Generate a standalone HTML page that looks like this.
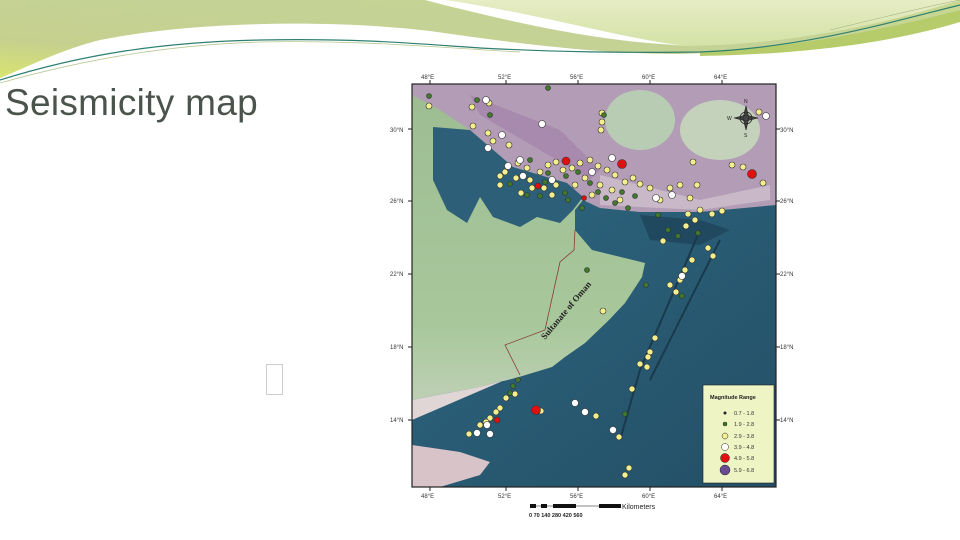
<!DOCTYPE html>
<html><head><meta charset="utf-8">
<style>
html,body{margin:0;padding:0;background:#fff;}
body{width:960px;height:540px;position:relative;overflow:hidden;font-family:"Liberation Sans",sans-serif;}
.t{position:absolute;left:5px;top:82px;font-size:37px;color:#4a544c;letter-spacing:0.3px;}
.box{position:absolute;left:266px;top:364px;width:15px;height:29px;border:1px solid #ccc;}
svg{position:absolute;left:0;top:0;}
</style></head><body>
<svg width="960" height="540" viewBox="0 0 960 540">
<defs>
<linearGradient id="g1" x1="0" y1="1" x2="1" y2="0">
<stop offset="0" stop-color="#d8e470"/><stop offset="0.25" stop-color="#c6d08e"/><stop offset="0.6" stop-color="#c4d296"/><stop offset="1" stop-color="#c8d890"/>
</linearGradient>
<linearGradient id="g2" x1="0" y1="0" x2="0" y2="1">
<stop offset="0" stop-color="#e6ecc4"/><stop offset="1" stop-color="#d4e2a6"/>
</linearGradient>
<linearGradient id="land" x1="0" y1="0" x2="0" y2="1">
<stop offset="0" stop-color="#9dbc92"/><stop offset="0.6" stop-color="#a8c89c"/><stop offset="1" stop-color="#d8d8d0"/>
</linearGradient>
<linearGradient id="sea" x1="0" y1="0" x2="1" y2="1">
<stop offset="0" stop-color="#2e6680"/><stop offset="1" stop-color="#234f66"/>
</linearGradient>
</defs>
<!-- banner -->
<path d="M0,0 H960 V12 C900,32 800,50 680,54 C600,54 520,44 430,31 C340,20 200,20 100,40 C60,50 30,66 0,78 Z" fill="url(#g1)"/>
<path d="M440,0 H960 C880,26 780,46 680,46 C610,38 540,14 440,0 Z" fill="url(#g2)"/>
<path d="M425,0 H445 C540,14 620,38 680,45 C600,42 510,22 425,0 Z" fill="#fff"/>
<path d="M700,52 C800,48 890,28 960,10 V22 C900,40 820,54 700,56 Z" fill="#b6cc6a"/>
<path d="M0,80 C80,55 160,42 260,40 C360,38 420,44 480,48 C560,52 620,53 700,52 C800,48 880,25 960,5" fill="none" stroke="#2f8070" stroke-width="1.2"/>
<path d="M0,83 C90,58 170,45 260,42 C360,40 430,47 520,52" fill="none" stroke="#b8c890" stroke-width="0.8"/>
<path d="M830,30 C880,18 920,8 960,0" fill="none" stroke="#a0b080" stroke-width="0.6"/>
<!-- map -->
<rect x="412" y="84" width="364" height="403" fill="url(#land)"/>
<path d="M412,84 H776 V205 L700,212 L640,212 L600,208 L583,200 L567,183 L513,167 L470,130 L440,110 L412,95 Z" fill="#b39cb5"/>
<ellipse cx="640" cy="120" rx="35" ry="30" fill="#b8ccb4"/>
<ellipse cx="720" cy="130" rx="40" ry="30" fill="#c4d2bc"/>
<path d="M470,95 L560,130 L600,170 L590,180 L540,150 L480,115 Z" fill="#a88aae"/>
<path d="M600,175 L700,200 L770,185 L770,200 L700,210 L600,205 Z" fill="#c8b8c8"/>
<path d="M433,127 L470,130 L513,167 L567,183 L583,197 L573,210 L560,223 L537,217 L520,227 L493,217 L480,197 L467,223 L447,210 L433,180 Z" fill="#2d6078"/>
<path d="M583,200 L600,208 L640,212 L700,212 L776,205 V487 H412 V400 L479,387 L519,377 L552,367 L565,357 L585,343 L609,320 L625,303 L642,277 L645,263 L592,250 L575,230 L575,210 Z" fill="url(#sea)"/>
<path d="M412,400 L479,387 L519,377 L505,380 L412,420 Z" fill="#e0d6d6"/>
<path d="M412,445 L460,452 L490,462 L480,475 L440,487 L412,487 Z" fill="#d8c4c8"/>
<path d="M640,215 L700,220 L730,230 L700,245 L650,240 Z" fill="#1c4055" opacity="0.7"/>
<path d="M700,230 L640,370 L620,440 M720,240 L650,380" stroke="#1a3a4c" stroke-width="2" fill="none"/>
<path d="M575,230 L574,250 L560,262 L545,330 L505,345 L520,375" fill="none" stroke="#8a3a3a" stroke-width="0.8"/>
<text x="545" y="340" font-family="Liberation Serif,serif" font-weight="bold" font-size="9" fill="#222" transform="rotate(-50 545 340)">Sultanate of Oman</text>
<rect x="412" y="84" width="364" height="403" fill="none" stroke="#222" stroke-width="1.2"/>
<!-- compass -->
<g transform="translate(746,118)" stroke="#222" fill="#444"><path d="M0,-12 L3,0 L0,12 L-3,0 Z M-12,0 L0,-3 L12,0 L0,3 Z" stroke-width="0.6"/><circle r="6" fill="none" stroke-width="0.8"/></g>
<g font-size="5" fill="#222"><text x="744" y="103">N</text><text x="727" y="120">W</text><text x="744" y="137">S</text></g>
<!-- dots -->
<g stroke="#333" stroke-width="0.6">
<g fill="#f3ef8c">
<circle cx="429" cy="106" r="3"/><circle cx="472" cy="107" r="3"/><circle cx="489" cy="103" r="3"/><circle cx="473" cy="126" r="3"/><circle cx="488" cy="133" r="3"/><circle cx="493" cy="141" r="3"/><circle cx="509" cy="145" r="3"/><circle cx="518" cy="163" r="3"/><circle cx="527" cy="168" r="3"/><circle cx="505" cy="172" r="3"/><circle cx="500" cy="176" r="3"/><circle cx="516" cy="178" r="3"/><circle cx="530" cy="180" r="3"/><circle cx="540" cy="172" r="3"/><circle cx="548" cy="165" r="3"/><circle cx="556" cy="162" r="3"/><circle cx="563" cy="170" r="3"/><circle cx="572" cy="168" r="3"/><circle cx="580" cy="163" r="3"/><circle cx="590" cy="160" r="3"/><circle cx="598" cy="166" r="3"/><circle cx="607" cy="170" r="3"/><circle cx="615" cy="175" r="3"/><circle cx="585" cy="178" r="3"/><circle cx="575" cy="185" r="3"/><circle cx="556" cy="185" r="3"/><circle cx="544" cy="188" r="3"/><circle cx="532" cy="188" r="3"/><circle cx="600" cy="185" r="3"/><circle cx="612" cy="190" r="3"/><circle cx="625" cy="182" r="3"/><circle cx="633" cy="178" r="3"/><circle cx="640" cy="184" r="3"/><circle cx="650" cy="188" r="3"/><circle cx="620" cy="200" r="3"/><circle cx="592" cy="195" r="3"/><circle cx="552" cy="195" r="3"/><circle cx="521" cy="193" r="3"/><circle cx="500" cy="185" r="3"/><circle cx="602" cy="113" r="3"/><circle cx="601" cy="130" r="3"/><circle cx="602" cy="122" r="3"/><circle cx="670" cy="188" r="3"/><circle cx="680" cy="185" r="3"/><circle cx="660" cy="200" r="3"/><circle cx="690" cy="198" r="3"/><circle cx="697" cy="185" r="3"/><circle cx="700" cy="210" r="3"/><circle cx="712" cy="214" r="3"/><circle cx="722" cy="211" r="3"/><circle cx="688" cy="214" r="3"/><circle cx="695" cy="220" r="3"/><circle cx="686" cy="226" r="3"/><circle cx="663" cy="241" r="3"/><circle cx="692" cy="260" r="3"/><circle cx="685" cy="270" r="3"/><circle cx="680" cy="280" r="3"/><circle cx="676" cy="292" r="3"/><circle cx="670" cy="285" r="3"/><circle cx="708" cy="248" r="3"/><circle cx="713" cy="256" r="3"/><circle cx="603" cy="311" r="3"/><circle cx="655" cy="338" r="3"/><circle cx="650" cy="352" r="3"/><circle cx="648" cy="357" r="3"/><circle cx="640" cy="364" r="3"/><circle cx="647" cy="367" r="3"/><circle cx="515" cy="394" r="3"/><circle cx="506" cy="398" r="3"/><circle cx="500" cy="408" r="3"/><circle cx="496" cy="412" r="3"/><circle cx="490" cy="418" r="3"/><circle cx="486" cy="422" r="3"/><circle cx="480" cy="425" r="3"/><circle cx="469" cy="434" r="3"/><circle cx="541" cy="411" r="3"/><circle cx="596" cy="416" r="3"/><circle cx="632" cy="389" r="3"/><circle cx="619" cy="437" r="3"/><circle cx="629" cy="468" r="3"/><circle cx="625" cy="475" r="3"/><circle cx="759" cy="112" r="3"/><circle cx="743" cy="167" r="3"/><circle cx="732" cy="165" r="3"/><circle cx="693" cy="162" r="3"/><circle cx="763" cy="183" r="3"/></g>
<g fill="#3f7a2a"><circle cx="429" cy="96" r="2.5"/><circle cx="477" cy="100" r="2.5"/><circle cx="490" cy="115" r="2.5"/><circle cx="530" cy="160" r="2.5"/><circle cx="548" cy="173" r="2.5"/><circle cx="566" cy="176" r="2.5"/><circle cx="578" cy="172" r="2.5"/><circle cx="590" cy="183" r="2.5"/><circle cx="598" cy="192" r="2.5"/><circle cx="606" cy="198" r="2.5"/><circle cx="615" cy="203" r="2.5"/><circle cx="628" cy="208" r="2.5"/><circle cx="635" cy="196" r="2.5"/><circle cx="622" cy="192" r="2.5"/><circle cx="545" cy="182" r="2.5"/><circle cx="527" cy="195" r="2.5"/><circle cx="540" cy="196" r="2.5"/><circle cx="565" cy="193" r="2.5"/><circle cx="510" cy="184" r="2.5"/><circle cx="582" cy="208" r="2.5"/><circle cx="568" cy="200" r="2.5"/><circle cx="658" cy="215" r="2.5"/><circle cx="668" cy="230" r="2.5"/><circle cx="678" cy="236" r="2.5"/><circle cx="698" cy="233" r="2.5"/><circle cx="587" cy="270" r="2.5"/><circle cx="646" cy="285" r="2.5"/><circle cx="682" cy="296" r="2.5"/><circle cx="518" cy="380" r="2.5"/><circle cx="513" cy="386" r="2.5"/><circle cx="510" cy="393" r="2.5"/><circle cx="625" cy="414" r="2.5"/><circle cx="604" cy="115" r="2.5"/><circle cx="548" cy="88" r="2.5"/></g>
<g fill="#fff"><circle cx="486" cy="100" r="3.5"/><circle cx="542" cy="124" r="3.5"/><circle cx="488" cy="148" r="3.5"/><circle cx="502" cy="135" r="3.5"/><circle cx="520" cy="160" r="3.5"/><circle cx="508" cy="166" r="3.5"/><circle cx="523" cy="176" r="3.5"/><circle cx="552" cy="180" r="3.5"/><circle cx="592" cy="172" r="3.5"/><circle cx="612" cy="158" r="3.5"/><circle cx="672" cy="195" r="3.5"/><circle cx="682" cy="276" r="3.5"/><circle cx="575" cy="403" r="3.5"/><circle cx="585" cy="412" r="3.5"/><circle cx="613" cy="430" r="3.5"/><circle cx="487" cy="425" r="3.5"/><circle cx="477" cy="433" r="3.5"/><circle cx="490" cy="434" r="3.5"/><circle cx="766" cy="116" r="3.5"/><circle cx="656" cy="198" r="3.5"/></g>
<g fill="#e01010"><circle cx="622" cy="164" r="4.5"/><circle cx="566" cy="161" r="4"/><circle cx="752" cy="174" r="4.5"/><circle cx="536" cy="410" r="4.5"/><circle cx="497" cy="420" r="3"/><circle cx="538" cy="186" r="3"/><circle cx="584" cy="198" r="2.5"/></g>
</g>
<!-- legend -->
<rect x="703" y="385" width="71" height="98" fill="#eef4c4" stroke="#222" stroke-width="0.6"/>
<text x="710" y="399" font-size="5.5" font-weight="bold" fill="#222">Magnitude Range</text>
<g font-size="5.5" fill="#333" stroke="#222" stroke-width="0.5">
<circle cx="725" cy="413" r="1.3" fill="#222"/><text x="734" y="415" stroke="none">0.7 - 1.8</text>
<circle cx="725" cy="424" r="2" fill="#3f7a2a"/><text x="734" y="426" stroke="none">1.9 - 2.8</text>
<circle cx="725" cy="436" r="3" fill="#f3ef8c"/><text x="734" y="438" stroke="none">2.9 - 3.8</text>
<circle cx="725" cy="447" r="3.5" fill="#fff"/><text x="734" y="449" stroke="none">3.9 - 4.8</text>
<circle cx="725" cy="458" r="4.5" fill="#e01010"/><text x="734" y="460" stroke="none">4.9 - 5.8</text>
<circle cx="725" cy="470" r="5" fill="#6a4a90"/><text x="734" y="472" stroke="none">5.9 - 6.8</text>
</g>
<!-- axes -->
<g font-size="6" fill="#333">
<text x="421" y="79">48°E</text><text x="498" y="79">52°E</text><text x="570" y="79">56°E</text><text x="642" y="79">60°E</text><text x="714" y="79">64°E</text>
<text x="421" y="498">48°E</text><text x="498" y="498">52°E</text><text x="570" y="498">56°E</text><text x="642" y="498">60°E</text><text x="714" y="498">64°E</text>
<text x="390" y="132">30°N</text><text x="390" y="203">26°N</text><text x="390" y="276">22°N</text><text x="390" y="349">18°N</text><text x="390" y="422">14°N</text>
<text x="780" y="132">30°N</text><text x="780" y="203">26°N</text><text x="780" y="276">22°N</text><text x="780" y="349">18°N</text><text x="780" y="422">14°N</text>
</g>
<g stroke="#222" stroke-width="1">
<path d="M430,80V84M506,80V84M578,80V84M650,80V84M722,80V84M430,487V491M506,487V491M578,487V491M650,487V491M722,487V491M408,129H412M408,201H412M408,274H412M408,347H412M408,420H412M776,129H780M776,201H780M776,274H780M776,347H780M776,420H780"/>
</g>
<g fill="#111"><rect x="530" y="504" width="6" height="4"/><rect x="541" y="504" width="6" height="4"/><rect x="553" y="504" width="23" height="4"/><rect x="599" y="504" width="22" height="4"/></g>
<path d="M530,506H621" stroke="#111" stroke-width="0.6"/>
<text x="622" y="509" font-size="7" fill="#222">Kilometers</text>
<text x="529" y="517" font-size="5.5" fill="#222" font-weight="bold">0  70 140     280     420     560</text>
</svg>
<div class="t">Seismicity map</div>
<div class="box"></div>
</body></html>
